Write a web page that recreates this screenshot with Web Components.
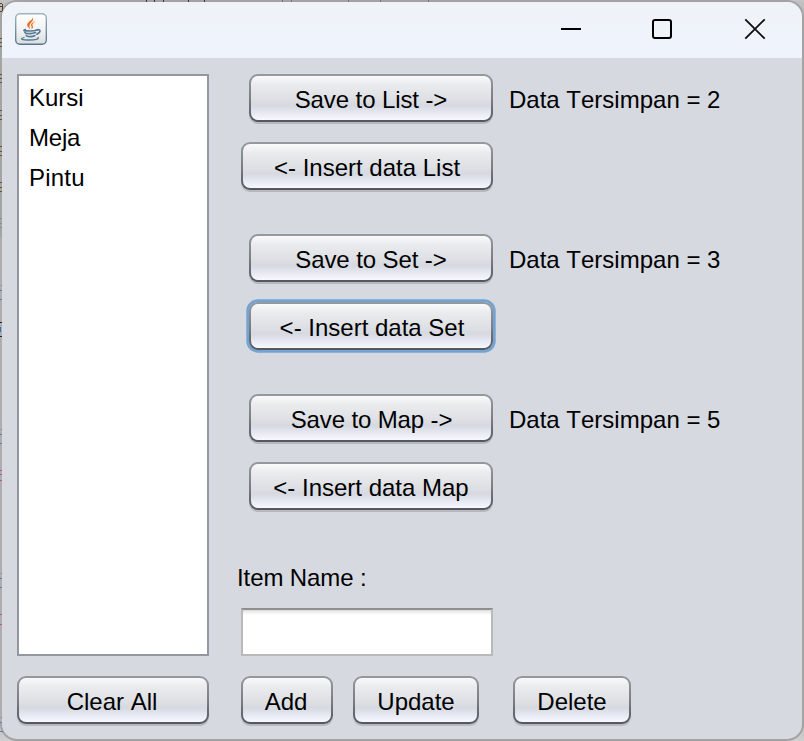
<!DOCTYPE html>
<html lang="id"><head><meta charset="utf-8"><title>Data</title>
<style>
html,body{margin:0;height:100%;overflow:hidden}
body{font:24px/28px "Liberation Sans",Arial,sans-serif;font-kerning:none;color:#000}
</style></head><body>
<desk-backdrop>
<app-window>
<java-icon slot="icon"></java-icon>
<window-controls slot="controls"></window-controls>
<item-list slot="list"><list-item>Kursi</list-item><list-item style="letter-spacing:-.2px">Meja</list-item><list-item style="letter-spacing:.2px">Pintu</list-item></item-list>
<action-group slot="groups">
<nimbus-button slot="save" style="letter-spacing:-.1px">Save to List -&gt;</nimbus-button><span slot="status">Data Tersimpan = 2</span><nimbus-button slot="insert" wide>&lt;- Insert data List</nimbus-button>
</action-group>
<action-group slot="groups">
<nimbus-button slot="save" style="letter-spacing:-.1px">Save to Set -&gt;</nimbus-button><span slot="status">Data Tersimpan = 3</span><nimbus-button slot="insert" focused style="text-indent:2px">&lt;- Insert data Set</nimbus-button>
</action-group>
<action-group slot="groups">
<nimbus-button slot="save" style="letter-spacing:-.13px;text-indent:1px">Save to Map -&gt;</nimbus-button><span slot="status">Data Tersimpan = 5</span><nimbus-button slot="insert">&lt;- Insert data Map</nimbus-button>
</action-group>
<text-field slot="field" style="letter-spacing:-.1px">Item Name :</text-field>
<nimbus-button slot="footer" style="width:192px;margin-right:32px;text-indent:-2px">Clear All</nimbus-button>
<nimbus-button slot="footer" style="width:92px;margin-right:20px;text-indent:-2px">Add</nimbus-button>
<nimbus-button slot="footer" style="width:126px;margin-right:34px">Update</nimbus-button>
<nimbus-button slot="footer" style="width:118px">Delete</nimbus-button>
</app-window>
</desk-backdrop>
<script>
const define=(name,html)=>{
  const t=document.createElement('template');t.innerHTML=html;
  customElements.define(name,class extends HTMLElement{
    constructor(){super();this.attachShadow({mode:'open'}).append(t.content.cloneNode(true));}
  });
};
define('desk-backdrop',`<style>
:host{display:block;position:relative;box-sizing:border-box;width:804px;height:741px;padding:2px;background:linear-gradient(#c4c4c4 0,#a8a8a8 30px,#a3a3a3 700px,#d0d0d0)}
svg{position:absolute;left:0;top:0}
</style><slot></slot>
<svg width="804" height="741" fill="none" stroke-width="1" shape-rendering="crispEdges">
<rect x="0" y="16" width="2" height="221" fill="#a6a4a3"/><rect x="0" y="237" width="2" height="486" fill="#aeadad"/>
<path d="M0 3.500h2M2.500 4v7M0 6.500h2M0 11.500h2" stroke="#54432f"/>
<path d="M0 38.500h2M0 42.500h2M0 46.500h2M0 74.500h2M0 78.500h2M0 82.500h2M0 110.500h2M0 115.500h2M0 119.500h2M0 146.500h2M0 151.500h2M0 155.500h2M0 182.500h2M0 187.500h2M0 191.500h2" stroke="#65552f"/>
<path d="M0 218.500h2M0 223.500h2M0 227.500h2" stroke="#8b8b8b"/>
<path d="M0 290.500h2M0 299.500h2M1.500 285v1M0 434.500h2M0 443.500h2M1.500 429v1M0 578.500h2M0 587.500h2M1.500 573v1M1 717.500h1M0 722.500h2M0 731.500h3" stroke="#617bc0"/>
<path d="M0 322.500h2M0 336.500h2" stroke="#242424"/><path d="M0.500 327v5" stroke="#2c78b2"/>
<path d="M0 470.500h2M0 474.500h2M0 480.500h2M0 614.500h2M0 624.500h2" stroke="#ad5a96"/>
<path d="M146.500 0v2M154.500 0v2M163.500 0v2M188.500 0v2M204.500 0v2" stroke="#35303a"/>
<path d="M282.500 0v2M291.500 0v2M348.500 0v2M380.500 0v2M428.500 0v2" stroke="#a0569a"/>
</svg>`);
define('app-window',`<style>
:host{display:flex;flex-direction:column;box-sizing:border-box;width:800px;height:737px;border-radius:15px;overflow:hidden;background:#d6d9e0;box-shadow:0 0 0 2px #a3a3a3}
header{display:flex;justify-content:space-between;height:56px;flex:none;background:linear-gradient(#eff3f8,#eff3fc)}
main{display:grid;grid-template-columns:192px 1fr;column-gap:26px;height:582px;margin:16px 15px 20px}
.right{display:flex;flex-direction:column}
.groups{display:flex;flex-direction:column;gap:44px;padding-left:6px}
footer{display:flex;padding-left:15px}
</style><header><slot name="icon"></slot><slot name="controls"></slot></header>
<main><slot name="list"></slot><div class="right"><div class="groups"><slot name="groups"></slot></div><slot name="field"></slot></div></main>
<footer><slot name="footer"></slot></footer>`);
define('java-icon',`<style>:host{display:block;margin:11px 0 0 13px;width:32px;height:32px}svg{display:block}</style>
<svg width="32" height="32" viewBox="0 0 32 32" fill="none"><defs><linearGradient id="g" x2="0" y2="1"><stop stop-color="#fff"/><stop offset=".5" stop-color="#f3f3f3"/><stop offset="1" stop-color="#dcdddf"/></linearGradient><linearGradient id="b" x2="0" y2="1"><stop stop-color="#9fb4c2"/><stop offset="1" stop-color="#54778f"/></linearGradient></defs>
<rect x=".7" y=".7" width="30.600" height="30.600" rx="4.300" fill="url(#g)" stroke="url(#b)" stroke-width="1.400"/>
<path d="M17.500 4c1.200 3-5.400 4.700-5.400 7.700 0 1.800 1.800 3 3.100 4.500-.5-2-1-2.900-.5-4.300.8-2.300 4.900-4.300 2.800-7.900Z" fill="#e76f1d"/>
<path d="M20.900 8.100c-3 1-5.300 2.700-4.800 4.500.2.900 1.100 1.500.2 3.700 2.200-1.300 2-2.600 1.300-3.500-.9-1.300.7-2.800 3.300-4.700Z" fill="#e76f1d"/>
<g stroke="#557a95" stroke-linecap="round"><path d="M10.300 16.500c-3 1-1.200 1.500 4.700 1.500 3.600 0 5.600-.4 7-.9M9.800 19.200c.4 1.300 2.200 1.400 4.900 1.400 2.500 0 4.400-.4 5.900-1M11.200 22.200c.4 1.200 2 1.400 4 1.400 1.900 0 3.500-.4 4.700-1.100" stroke-width="1.600"/>
<path d="M21.800 17c3.900-1.500 4.600 2.200 0 4.200" stroke-width="1.600"/><path d="M9 24.500c-5 1.600-1.800 2.500 5.100 2.500 6.500 0 10.200-1 9-2.500" stroke-width="1.300"/></g></svg>`);
define('window-controls',`<style>:host{display:flex;gap:70px;margin:16px 36px 0 0}svg{display:block}</style>
<svg width="22" height="22" fill="none" stroke="#000" stroke-width="2"><path d="M1 11h20"/></svg>
<svg width="22" height="22" fill="none" stroke="#000" stroke-width="2"><rect x="1" y="2" width="18" height="18" rx="2"/></svg>
<svg width="22" height="22" fill="none" stroke="#111" stroke-width="1.900"><path d="m1.300 1.300 19.400 19.400M20.700 1.300 1.300 20.700"/></svg>`);
define('item-list',`<style>:host{display:block;box-sizing:border-box;border:2px solid #9297a1;background:#fff;padding:2px 10px}</style><slot></slot>`);
define('list-item',`<style>:host{display:block;height:40px;line-height:40px}</style><slot></slot>`);
define('action-group',`<style>
:host{display:grid;grid-template-columns:252px auto;column-gap:16px;row-gap:20px;justify-content:start;justify-items:end;height:116px}
::slotted([slot=save]),::slotted([slot=insert]){width:244px}
::slotted([wide]){width:252px}
::slotted([slot=status]){line-height:52px;height:48px}
</style><slot name="save"></slot><slot name="status"></slot><slot name="insert"></slot>`);
define('nimbus-button',`<style>
:host{display:block;box-sizing:border-box;height:48px;flex:none;padding:2px;border-radius:9px;background:linear-gradient(#959aa1,#7c8086 50%,#53565c);box-shadow:0 2px 0 #b5b8be;text-align:center;white-space:nowrap}
:host([focused]){box-shadow:0 0 0 2.700px #73a4d1}
div{height:44px;line-height:48px;border-radius:7px;background:linear-gradient(#fafafb,#eaebed 20%,#dfe1e5 50%,#d6d9e0 68%,#e4e7ef 82%,#f7f9ff)}
</style><div><slot></slot></div>`);
define('text-field',`<style>
:host{display:block;margin-top:54px;padding-left:2px}
label{display:block;height:28px;line-height:28px}
.box{box-sizing:border-box;width:252px;height:48px;margin:16px 0 0 4px;border:2px solid #b9b9b9;border-top-color:#8e8e8e;background:linear-gradient(#dcdcdc,#f5f5f5 3px,#fff 5px)}
</style><label><slot></slot></label><div class="box" role="textbox"></div>`);
</script>
</body></html>
